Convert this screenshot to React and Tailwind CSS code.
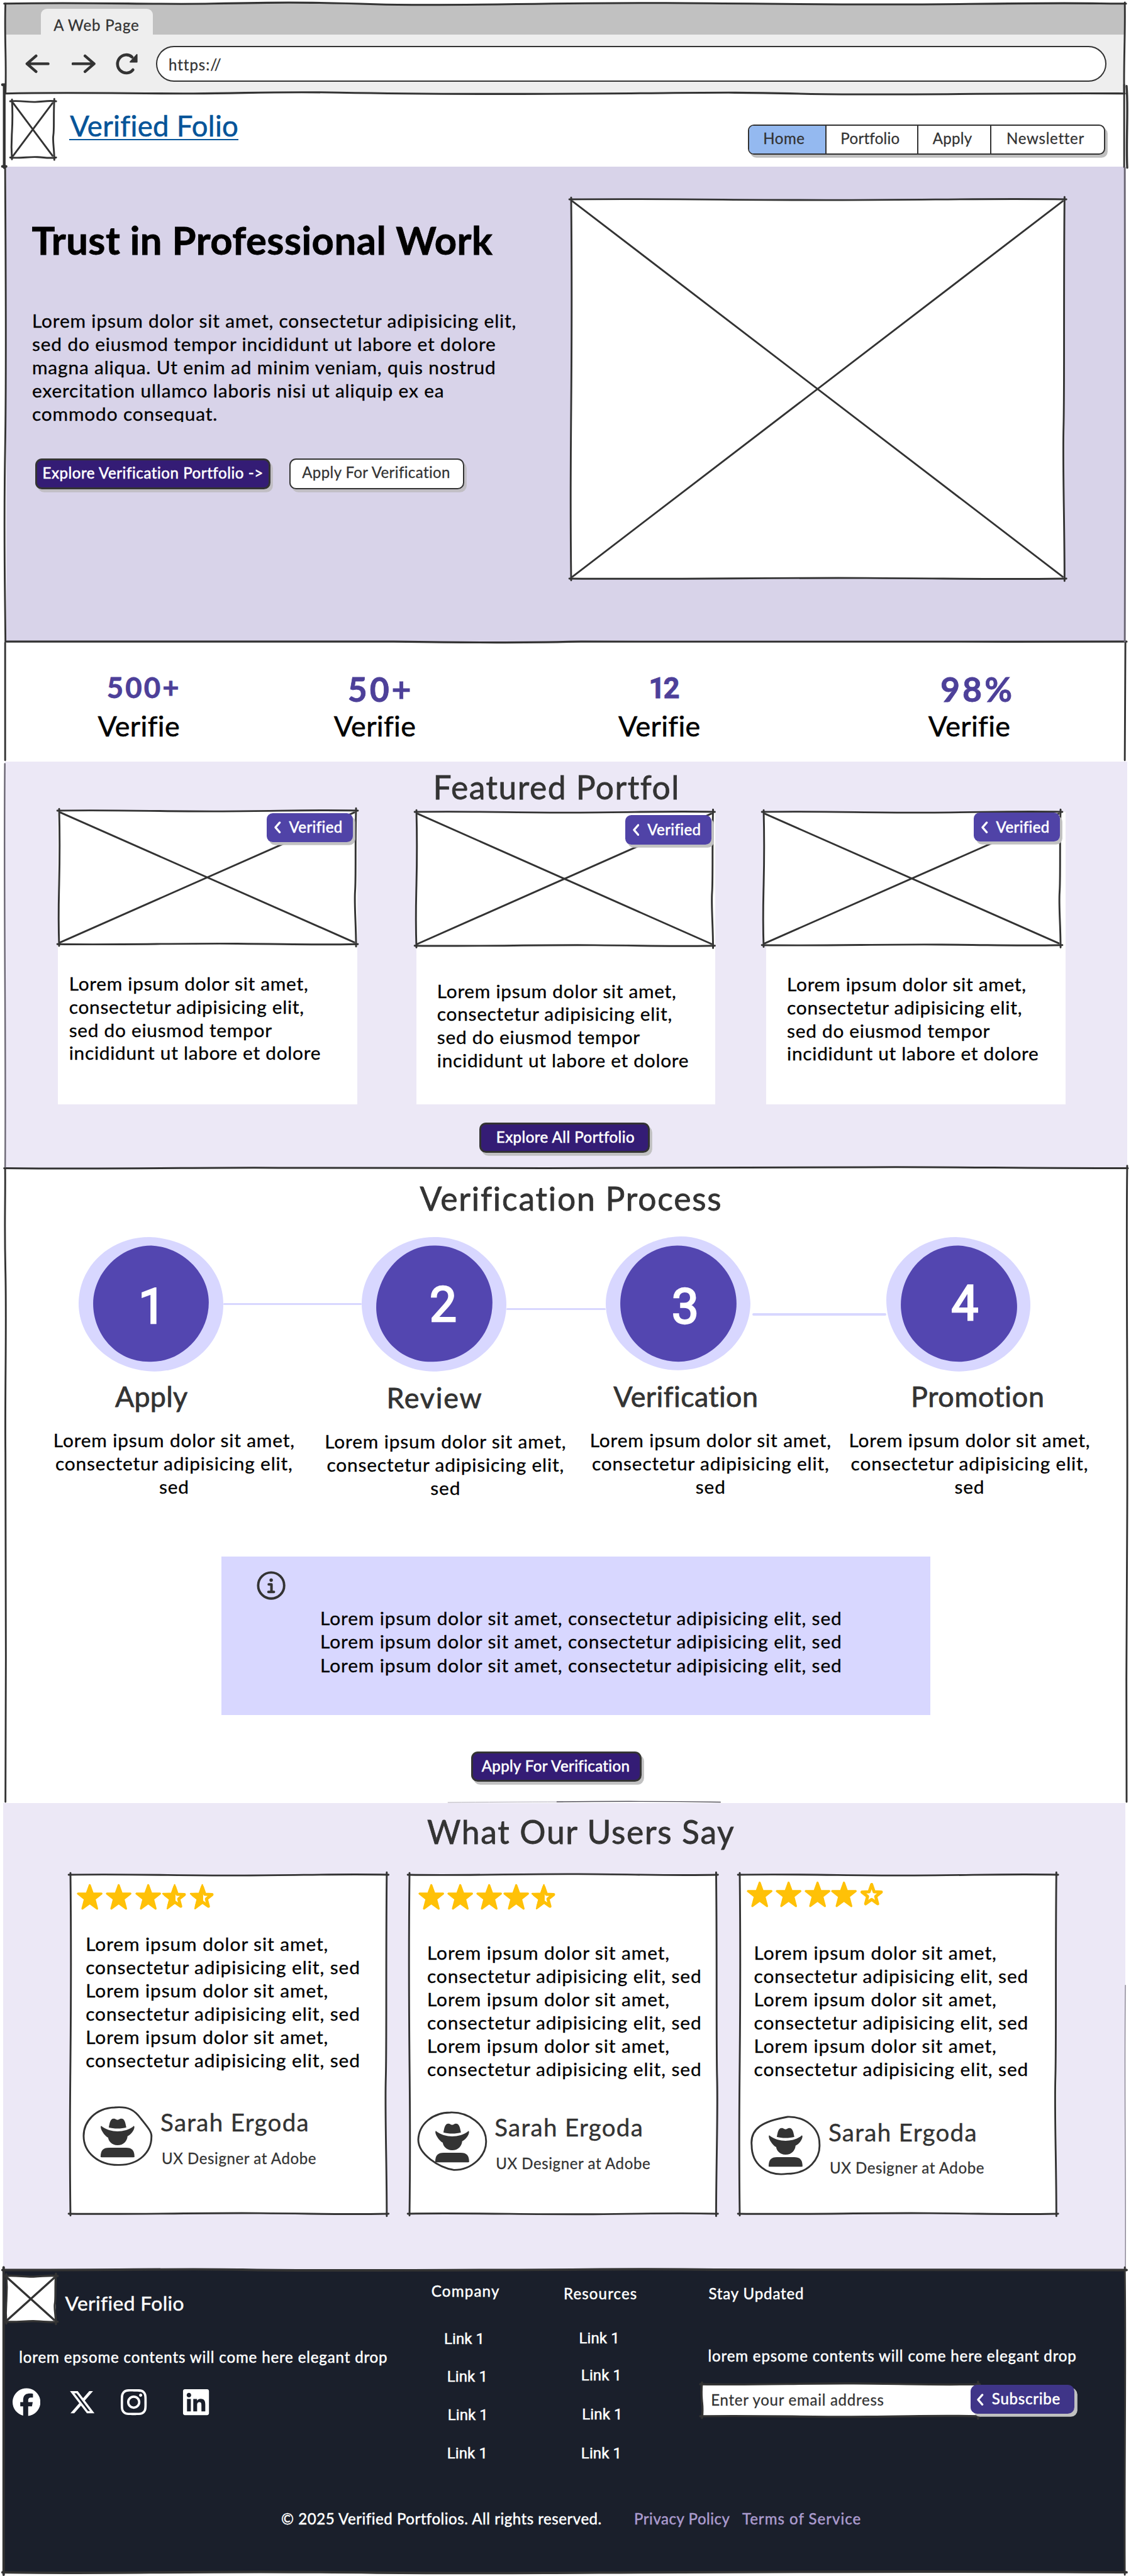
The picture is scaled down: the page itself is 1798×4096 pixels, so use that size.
import React from "react";
import { FaFacebook, FaXTwitter, FaInstagram, FaLinkedin } from "react-icons/fa6";

const INK = "#333333";

/* Hand-drawn rectangle outline with overshooting corners and an optional cross */
function Sketch({ w, h, cross = false, fill = "none", sw = 3, flip = 1 }) {
  const a = 1.6 * flip;
  return (
    <svg width={w} height={h} viewBox={`0 0 ${w} ${h}`} fill="none" stroke={INK} strokeWidth={sw} strokeLinecap="round" className="absolute left-0 top-0 overflow-visible">
      {fill !== "none" && <rect width={w} height={h} fill={fill} stroke="none" />}
      <path d={`M-3 0 C${w * 0.2} ${-a} ${w * 0.35} ${a} ${w * 0.55} ${a * 0.7} S${w * 0.85} ${-a} ${w + 3} 0`} />
      <path d={`M-3 ${h} C${w * 0.2} ${h + a} ${w * 0.4} ${h - a} ${w * 0.6} ${h - a * 0.5} S${w * 0.85} ${h + a} ${w + 3} ${h}`} />
      <path d={`M0 -3 C${a} ${h * 0.25} ${a * 0.5} ${h * 0.4} 0 ${h * 0.55} S${-a} ${h * 0.8} 0 ${h + 3}`} />
      <path d={`M${w} -4 C${w - a} ${h * 0.25} ${w} ${h * 0.5} ${w - a} ${h * 0.6} S${w} ${h * 0.85} ${w} ${h + 4}`} />
      {cross && <path d={`M2 3 L${w - 3} ${h - 3} M${w - 3} 3 L2 ${h - 3}`} />}
    </svg>
  );
}

function PageLines() {
  return (
    <svg width="1868" height="4256" viewBox="0 0 1868 4256" fill="none" stroke={INK} strokeLinecap="round" className="pointer-events-none absolute left-0 top-0">
      <g strokeWidth="3.2">
        <path d="M7 6 C150 3 250 8 350 6 S500 3 620 7 S900 4 1100 5 S1400 9 1600 6.500 S1800 6 1860 6" />
        <path d="M9 154.500 C120 152 230 155 320 154.500 S460 151 560 153 S800 156 1000 154.500 S1200 152 1330 155 S1700 153 1858 154.500" />
        <path d="M11 1060 C300 1061 500 1058 650 1060 S850 1062 960 1060 S1500 1061 1861 1060" />
        <path d="M7 1930 C200 1932 350 1928.500 460 1929.500 S700 1931 900 1930 S1300 1929.500 1430 1928.500 S1700 1930.500 1863 1930" />
      </g>
      <g strokeWidth="3">
        <path d="M9 6 C7 60 11 100 9 154" />
        <path d="M1858 4 C1859 60 1856 100 1857 154" />
        <path d="M1857 140 V276" />
        <path d="M8.500 275 C9 400 11 600 8.500 740 S8 950 9 1060" />
        <path d="M8.500 1062 V1256 M1859 1062 L1858 1256" />
        <path d="M8.500 1932 C9 2000 7 2010 9 2100 S8 2300 9 2400 S10 2800 9 2977" />
        <path d="M1862 1926 C1860 2050 1863 2300 1862 2500 S1860 2800 1861 2977" />
      </g>
      <path d="M7 142 V277 M4 140 H8 M4 275 H10" strokeWidth="4.500" />
      <path d="M1861 142 C1864 180 1860 230 1862 277" strokeWidth="3.500" />
      <path d="M1858 277 C1857 500 1860 800 1858 1060" stroke="#6a6673" strokeWidth="3" />
      <path d="M8 1262 C6 1500 10 1700 8.500 1928" stroke="#6a6673" strokeWidth="2.500" />
      <path d="M740 2978 C800 2977.500 860 2977 930 2977" stroke="#a9a6b2" strokeWidth="1" />
      <path d="M920 2977 C1000 2976 1100 2976 1190 2977.500" stroke="#55535c" strokeWidth="1.500" />
      <path d="M1859 3280 C1857 3450 1860 3600 1859 3748" stroke="#8a8694" strokeWidth="1.500" />
      <g strokeWidth="4">
        <path d="M4 3750.500 C200 3751 300 3748 400 3750 S600 3751 800 3750.500 S1050 3748 1180 3750 S1600 3750 1861 3750.500" />
        <path d="M4 4250 C150 4253 300 4248 500 4249.500 S700 4252 900 4251 S1500 4247 1861 4250" />
        <path d="M6 3746 V4254" />
        <path d="M1858 3746 C1860 3900 1857 4100 1858 4254" strokeWidth="3" />
      </g>
    </svg>
  );
}

function T({ className = "", children }) {
  return <span className={"block translate-x-[1.500px] translate-y-[1.800px] whitespace-nowrap leading-none " + className}>{children}</span>;
}

function Lines({ lines, tracking = "tracking-[0.880px]", className = "" }) {
  return (
    <div className={"translate-x-[2px] translate-y-[1px] text-[31px] text-black [-webkit-text-stroke:0.350px_#000] " + tracking + " " + className}>
      {lines.map((l, i) => (
        <div key={i} className="whitespace-nowrap">{l}</div>
      ))}
    </div>
  );
}

function Chevron({ className = "" }) {
  return (
    <svg viewBox="0 0 11 20" className={className} fill="none" stroke="#fff" strokeWidth="3.400" strokeLinecap="round" strokeLinejoin="round">
      <path d="M9 2 L2 10 L9 18" />
    </svg>
  );
}

function Badge({ className }) {
  return (
    <div className={"absolute flex h-[48px] w-[142px] rounded-[10px] bg-[#5043a7] pl-[12px] text-white shadow-[4px_5px_0_#c1c1c1] " + className}>
      <Chevron className="mt-[14px] h-[20px] w-[11px]" />
      <T className="ml-[12px] mt-[8.800px] text-[25px] tracking-[0.4px] [-webkit-text-stroke:0.6px_#fff]">Verified</T>
    </div>
  );
}

function PortfolioCard({ className, imageClass, imageW, imageH, badgeClass, textClass }) {
  return (
    <article className={"bg-white " + className}>
      <div className={"relative " + imageClass}>
        <Sketch w={imageW} h={imageH} cross fill="#fff" />
        <Badge className={badgeClass} />
      </div>
      <Lines
        tracking="tracking-[0.750px]"
        className={"leading-[38.200px] " + textClass}
        lines={["Lorem ipsum dolor sit amet,", "consectetur adipisicing elit,", "sed do eiusmod tempor", "incididunt ut labore et dolore"]}
      />
    </article>
  );
}

const BLOBS = [
  ["M117 0 C186 2 239 50 239 111 C239 172 190 222 126 222 C55 222 0 170 0 110 C0 50 50 0 117 0Z", "M120 14 C170 16 215 58 215 108 C215 160 172 206 120 206 C62 208 24 160 24 110 C24 60 68 14 120 14Z"],
  ["M121 0 C186 0 239 52 239 112 C239 172 188 222 118 222 C55 222 0 172 0 110 C0 50 54 0 121 0Z", "M119 14 C174 12 216 58 216 108 C216 164 174 206 118 206 C66 208 24 166 24 116 C24 66 64 14 119 14Z"],
  ["M124 -1 C186 -1 237 52 239 110 C238 170 186 220 120 220 C55 220 0 170 0 110 C0 52 56 0 124 -1Z", "M118 14 C172 14 216 58 216 110 C216 162 170 206 120 206 C66 206 24 164 24 110 C24 58 66 14 118 14Z"],
  ["M115 0 C184 2 238 54 238 112 C238 172 186 222 120 222 C55 222 0 172 0 104 C0 50 50 0 115 0Z", "M118 14 C172 16 214 62 216 112 C218 164 168 206 120 206 C66 206 24 164 24 112 C24 58 66 14 118 14Z"],
];

function StepBlob({ i, n, className }) {
  return (
    <div className="grid h-[222px] w-[239px] shrink-0">
      <svg width="239" height="222" viewBox="0 0 239 222" className="overflow-visible [grid-area:1/1]">
        <path d={BLOBS[i][0]} fill="#d8d7ff" />
        <path d={BLOBS[i][1]} fill="#5346b0" />
      </svg>
      <T className={"text-[80px] font-['Roboto',sans-serif] text-white [grid-area:1/1] [-webkit-text-stroke:2.500px_#fff] [stroke-linejoin:round] " + className}>{n}</T>
    </div>
  );
}

function Connector({ className }) {
  return <div className={"h-[3.500px] shrink-0 rounded bg-[#d8d7ff] " + className} />;
}

function Step({ title, className, titleClass }) {
  return (
    <div className={"w-[400px] shrink-0 " + className}>
      <T className={"text-[46.600px] text-[#333] [-webkit-text-stroke:0.8px_#333] " + titleClass}>{title}</T>
      <Lines
        className="mt-[31.500px] text-center leading-[38.300px]"
        lines={["Lorem ipsum dolor sit amet,", "consectetur adipisicing elit,", "sed"]}
      />
    </div>
  );
}

const STAR = "M50 5 L61.500 37 L95 37.500 L68.500 58.500 L78 95 L50 74 L22 95 L31.500 58.500 L5 37.500 L38.500 37Z";
const STAR_INNER = "M50 12 L59.500 40 L87 41 L65.500 58 L73 86 L50 69.500 L27 86 L34.500 58 L13 41 L40.500 40Z";

function Star({ kind, className = "" }) {
  return (
    <svg viewBox="0 0 100 100" className={"h-[44px] w-[43px] shrink-0 " + className}>
      {kind === "full" && <path d={STAR} fill="#ffc107" stroke="#ffc107" strokeWidth="8" strokeLinejoin="round" />}
      {kind !== "full" && <path d={STAR_INNER} fill="#fff" stroke="#ffc107" strokeWidth="12" strokeLinejoin="round" />}
      {kind === "half" && <path d="M50 4 L50 74 L22 95 L31.500 58.500 L5 37.500 L38.500 37Z" fill="#ffc107" stroke="#ffc107" strokeWidth="6" strokeLinejoin="round" />}
    </svg>
  );
}

function Stars({ kinds, className }) {
  return (
    <div className={"flex " + className}>
      <Star kind={kinds[0]} />
      <Star kind={kinds[1]} className="ml-[5px]" />
      <Star kind={kinds[2]} className="ml-[5px]" />
      <Star kind={kinds[3]} className="ml-[1px]" />
      <Star kind={kinds[4]} className="ml-[3px]" />
    </div>
  );
}

const RINGS = [
  "M52 1 C75 -1 85 5 96 20 C108 35 114 42 113 50 C113 75 92 96 60 96 C25 97 1 75 1 48 C1 25 20 2 52 1Z",
  "M54 1 C85 0 113 22 113 48 C114 72 90 96 60 96 C35 92 1 70 1 46 C2 20 25 1 54 1Z",
  "M60 1 C90 0 113 20 113 45 C115 70 95 95 60 95 C25 100 1 78 1 48 C-2 20 20 8 60 1Z",
];

function Avatar({ i }) {
  return (
    <svg width="114" height="97" viewBox="0 0 114 97" className="shrink-0 overflow-visible">
      <path d={RINGS[i]} fill="#fff" stroke={INK} strokeWidth="3" />
      <g fill={INK}>
        <path d="M42.500 34 C44 27 45 19.500 50.500 19.500 C54 19.500 54 21.500 57 21.500 C60 21.500 60 19.500 63.500 19.500 C69 19.500 70 27 71.500 34 C64 36.500 50 36.500 42.500 34Z" />
        <path d="M30 31.500 C38 38 48 40.500 57 40.500 C66 40.500 77 38 84 31.500 C87 33 82 45 73.500 48.500 C73 56 67 63.500 57 63.500 C47 63.500 42 56 41.500 51 C34 47 27 34 30 31.500Z" />
        <path d="M29 83 C29 72 33 67.500 43 67.500 H71 C81 67.500 85 72 85 83Q85 83.500 83 83.500H31Q29 83.500 29 83Z" />
      </g>
    </svg>
  );
}

function Testimonial({ i, w, h, className, kinds, starsClass, textClass, personClass }) {
  return (
    <article className={"relative h-[560px] shrink-0 bg-white " + className}>
      <Sketch w={w} h={h} flip={i === 1 ? -1 : 1} />
      <Stars kinds={kinds} className={starsClass} />
      <Lines
        tracking="tracking-[0.960px]"
        className={"leading-[38.500px] " + textClass}
        lines={[0, 1, 2].flatMap(() => ["Lorem ipsum dolor sit amet,", "consectetur adipisicing elit, sed"])}
      />
      <div className={"flex " + personClass}>
        <Avatar i={i} />
        <div className="ml-[12px] mt-[3.500px] text-[#333]">
          <T className="text-[40px] tracking-[1.350px] [-webkit-text-stroke:0.4px_#333]">Sarah Ergoda</T>
          <T className="ml-[2px] mt-[27px] text-[25px] tracking-[0.6px] [-webkit-text-stroke:0.3px_#333]">UX Designer at Adobe</T>
        </div>
      </div>
    </article>
  );
}

function Stat({ value, className, boxClass }) {
  return (
    <div className={"shrink-0 " + boxClass}>
      <div className="h-[66.700px]">
        <T className={"font-bold text-[#4d4099] [-webkit-text-stroke:0.8px_#4d4099] " + className}>{value}</T>
      </div>
      <T className="text-[46.600px] tracking-[0.4px] text-black [-webkit-text-stroke:0.6px_#000]">Verifie</T>
    </div>
  );
}

function Link1({ className }) {
  return <T className={"font-['Roboto',sans-serif] text-[25px] tracking-[0.1px] [-webkit-text-stroke:0.5px_#fff] " + className}>Link 1</T>;
}

export default function App() {
  return (
    <div className="relative flex h-[4256px] w-[1868px] flex-col overflow-hidden bg-white font-['Lato',sans-serif] [zoom:0.9624]">
      {/* Browser chrome */}
      <div className="ml-[9px] mt-[6px] w-[1849px] shrink-0">
        <div className="flex h-[51px] items-end bg-[#c1c1c1] pl-[59px]">
          <div className="h-[42px] w-[184px] rounded-t-[10px] bg-[#eee] pl-[19px] pt-[12px]">
            <T className="text-[25px] tracking-[0.85px] text-[#333] [-webkit-text-stroke:0.3px_#333]">A Web Page</T>
          </div>
        </div>
        <div className="flex h-[97px] items-center bg-[#eee] pl-[33px]">
          <svg width="40" height="32" viewBox="0 0 40 32" fill="none" stroke={INK} strokeWidth="4.600" strokeLinecap="round" strokeLinejoin="round">
            <path d="M38 16 H3 M18 3 L3 16 L18 29" />
          </svg>
          <svg width="40" height="32" viewBox="0 0 40 32" fill="none" stroke={INK} strokeWidth="4.600" strokeLinecap="round" strokeLinejoin="round" className="ml-[36px]">
            <path d="M2 16 H37 M22 3 L37 16 L22 29" />
          </svg>
          <svg width="38" height="36" viewBox="0 0 38 36" fill="none" stroke={INK} strokeWidth="4.800" strokeLinecap="round" className="ml-[32px]">
            <path d="M29.500 28 A14.500 15 0 1 1 28 7" />
            <path d="M36 3 V15 H25Z" fill={INK} strokeWidth="2" strokeLinejoin="round" />
          </svg>
          <div className="ml-[30px] flex h-[60px] w-[1570px] items-center rounded-[30px] border-[3px] border-[#333] bg-white pl-[17px]">
            <T className="text-[25px] tracking-[1px] text-[#333] [-webkit-text-stroke:0.3px_#333]">https://</T>
          </div>
        </div>
      </div>

      {/* Header */}
      <header className="flex h-[121px] shrink-0 items-start pl-[20px]">
        <div className="relative mt-[13.500px] h-[93px] w-[70px] shrink-0">
          <Sketch w={70} h={93} cross fill="#fff" />
        </div>
        <div className="ml-[24px] mt-[27.400px] w-[280px] border-b-[3px] border-[#055499] pb-[1.300px]">
          <T className="text-[47.300px] tracking-[0.3px] text-[#055499] [-webkit-text-stroke:0.6px_#055499]">Verified Folio</T>
        </div>
        <nav className="ml-auto mr-[42px] mt-[51.500px] flex h-[50px] w-[591px] overflow-visible rounded-[10px] border-[3px] border-[#333] bg-white text-[25px] text-[#333] shadow-[4px_5px_0_#bfbfbf] [-webkit-text-stroke:0.3px_#333]">
          <div className="w-[128px] rounded-l-[7px] border-r-[3px] border-[#333] bg-[#94b9f0] pl-[22px] pt-[7px]">
            <T className="tracking-[0.6px]">Home</T>
          </div>
          <div className="w-[152px] border-r-[3px] border-[#333] pl-[22px] pt-[7px]">
            <T className="tracking-[0.3px]">Portfolio</T>
          </div>
          <div className="w-[120px] border-r-[3px] border-[#333] pl-[22px] pt-[7px]">
            <T className="tracking-[0.3px]">Apply</T>
          </div>
          <div className="pl-[24px] pt-[7px]">
            <T className="tracking-[0.750px]">Newsletter</T>
          </div>
        </nav>
      </header>

      {/* Hero */}
      <section className="ml-[10px] flex h-[785px] w-[1848px] shrink-0 items-start bg-[#d8d3e9]">
        <div className="w-[933.500px] shrink-0 pl-[41px] pt-[88px]">
          <T className="text-[64px] font-bold tracking-[0.5px] text-black [-webkit-text-stroke:0.8px_#000]">Trust in Professional Work</T>
          <Lines
            className="mt-[82.500px] h-[187px] overflow-hidden leading-[38.450px]"
            lines={[
              "Lorem ipsum dolor sit amet, consectetur adipisicing elit,",
              "sed do eiusmod tempor incididunt ut labore et dolore",
              "magna aliqua. Ut enim ad minim veniam, quis nostrud",
              "exercitation ullamco laboris nisi ut aliquip ex ea",
              "commodo consequat.",
            ]}
          />
          <div className="ml-[7px] mt-[61px] flex">
            <button className="flex h-[51px] w-[389px] rounded-[11px] border-[3.500px] border-[#333] bg-[#341c75] pl-[7.500px] pt-[6px] text-white shadow-[4px_5px_0_#c1bec4]">
              <T className="text-[25px] tracking-[0.6px] [-webkit-text-stroke:0.6px_#fff]">Explore Verification Portfolio -&gt;</T>
            </button>
            <button className="ml-[31px] flex h-[51px] w-[289px] rounded-[11px] border-[3px] border-[#333] bg-white pl-[17.500px] pt-[6.500px] text-[#333] shadow-[4px_5px_0_#c1bec4]">
              <T className="text-[25px] tracking-[0.4px] [-webkit-text-stroke:0.3px_#333]">Apply For Verification</T>
            </button>
          </div>
        </div>
        <div className="relative mt-[54.500px] h-[626.500px] w-[815px]">
          <Sketch w={815} h={626.5} cross fill="#fff" />
        </div>
      </section>

      {/* Stats */}
      <section className="flex h-[198px] shrink-0 pl-[160px] pt-[47px]">
        <Stat value="500+" boxClass="w-[390px]" className="pl-[15px] pt-[3px] text-[47.300px] tracking-[3.200px]" />
        <Stat value="50+" boxClass="w-[470px]" className="pl-[23px] pt-[1.700px] text-[55.600px] tracking-[4px]" />
        <Stat value="12" boxClass="w-[512px]" className="pl-[50px] pt-[5px] text-[47.300px] tracking-[-3px] font-['Roboto',sans-serif]" />
        <Stat value="98%" boxClass="w-[200px]" className="pl-[20px] pt-[1.700px] text-[55.600px] tracking-[4.200px]" />
      </section>

      {/* Featured portfolios */}
      <section className="ml-[8px] h-[672px] w-[1854px] shrink-0 bg-[#ece8f6] pt-[13.500px]">
        <T className="ml-[706px] text-[53.600px] tracking-[1.550px] text-[#333] [-webkit-text-stroke:0.8px_#333]">Featured Portfol</T>
        <div className="flex h-[500px] items-start">
          <PortfolioCard
            className="ml-[88px] mt-[14.500px] h-[485.500px] w-[494px]"
            imageClass="ml-[2px] h-[220.500px] w-[490.500px]"
            imageW={490.5} imageH={220.5}
            badgeClass="left-[343px] top-[3.500px]"
            textClass="ml-[16px] mt-[45.400px]"
          />
          <PortfolioCard
            className="ml-[98px] mt-[16.500px] h-[483.500px] w-[493px]"
            imageClass="-ml-[0.500px] h-[221px] w-[490px]"
            imageW={490} imageH={221}
            badgeClass="left-[345.500px] top-[5.500px]"
            textClass="ml-[32px] mt-[55px]"
          />
          <PortfolioCard
            className="ml-[85px] mt-[16.500px] h-[483.500px] w-[494px]"
            imageClass="-ml-[4.500px] h-[220px] w-[490.500px]"
            imageW={490.5} imageH={220}
            badgeClass="left-[347.500px] top-[1px]"
            textClass="ml-[32px] mt-[45px]"
          />
        </div>
        <button className="ml-[784px] mt-[30px] flex h-[50px] w-[281px] rounded-[11px] border-[3.500px] border-[#333] bg-[#341c75] pl-[23px] pt-[6px] text-white shadow-[4px_5px_0_#c1c1c1]">
          <T className="text-[25px] tracking-[0.5px] [-webkit-text-stroke:0.6px_#fff]">Explore All Portfolio</T>
        </button>
      </section>

      {/* Verification process */}
      <section className="h-[1049px] shrink-0 pt-[21.500px]">
        <T className="ml-[692px] text-[53.600px] tracking-[1.850px] text-[#333] [-webkit-text-stroke:0.8px_#333]">Verification Process</T>
        <div className="mt-[39px] flex pl-[130px]">
          <StepBlob i={0} n="1" className="pl-[97px] pt-[74px]" />
          <Connector className="mt-[109px] w-[228px]" />
          <StepBlob i={1} n="2" className="pl-[111px] pt-[70px]" />
          <Connector className="mt-[117px] w-[165px]" />
          <StepBlob i={2} n="3" className="pl-[107px] pt-[74px]" />
          <Connector className="ml-[3px] mt-[126px] w-[221px]" />
          <StepBlob i={3} n="4" className="pl-[106px] pt-[68px]" />
        </div>
        <div className="mt-[15.700px] flex">
          <Step title="Apply" className="ml-[85.700px]" titleClass="pl-[103px] tracking-[0.2px]" />
          <Step title="Review" className="ml-[48.300px] mt-[2px]" titleClass="pl-[103px] tracking-[1.850px]" />
          <Step title="Verification" className="ml-[38px]" titleClass="pl-[40px] tracking-[0.450px]" />
          <Step title="Promotion" className="ml-[27.700px]" titleClass="pl-[103.500px] tracking-[0.7px]" />
        </div>
        <div className="ml-[366px] mt-[95px] flex h-[261.500px] w-[1171px] items-start bg-[#d8d7ff] pl-[58px]">
          <svg width="48" height="48" viewBox="0 0 48 48" fill="none" stroke={INK} strokeWidth="4" strokeLinecap="round" strokeLinejoin="round" className="mt-[24px] shrink-0">
            <circle cx="24" cy="24" r="21.500" />
            <path d="M20 22 H24.500 V34 M19.500 34.500 H28.500" strokeWidth="4.200" />
            <circle cx="24" cy="15" r="2.800" fill={INK} stroke="none" />
          </svg>
          <Lines
            tracking="tracking-[0.930px]"
            className="ml-[55px] mt-[81px] leading-[38.900px]"
            lines={[0, 1, 2].map(() => "Lorem ipsum dolor sit amet, consectetur adipisicing elit, sed")}
          />
        </div>
        <button className="ml-[778px] mt-[60.500px] flex h-[50px] w-[282px] rounded-[11px] border-[3.500px] border-[#333] bg-[#341c75] pl-[13px] pt-[6px] text-white shadow-[4px_5px_0_#c1c1c1]">
          <T className="text-[25px] tracking-[0.4px] [-webkit-text-stroke:0.6px_#fff]">Apply For Verification</T>
        </button>
      </section>

      {/* Testimonials */}
      <section className="ml-[5px] h-[771px] w-[1854px] shrink-0 bg-[#ece8f6] pt-[19.200px]">
        <T className="ml-[699px] text-[53.600px] tracking-[1.750px] text-[#333] [-webkit-text-stroke:0.8px_#333]">What Our Users Say</T>
        <div className="mt-[46px] flex">
          <Testimonial
            i={0} w={522.5} h={560} className="ml-[111px] w-[522.500px]"
            kinds={["full", "full", "full", "half", "half"]}
            starsClass="pl-[11px] pt-[14px]" textClass="pl-[23.500px] pt-[35.500px]" personClass="pl-[21.500px] pt-[58.500px]"
          />
          <Testimonial
            i={1} w={506.5} h={560} className="ml-[37.500px] w-[506.500px]"
            kinds={["full", "full", "full", "full", "half"]}
            starsClass="pl-[15px] pt-[14px]" textClass="pl-[27.500px] pt-[49.500px]" personClass="pl-[13.500px] pt-[53px]"
          />
          <Testimonial
            i={2} w={523} h={560} className="ml-[40px] w-[523px]"
            kinds={["full", "full", "full", "full", "empty"]}
            starsClass="pl-[10.500px] pt-[10.500px]" textClass="pl-[21px] pt-[53px]" personClass="pl-[18.500px] pt-[60.500px]"
          />
        </div>
      </section>

      {/* Footer */}
      <footer className="ml-[6px] h-[500px] w-[1852px] shrink-0 bg-[#1a1f2b] text-[25px] text-white [-webkit-text-stroke:0.5px_#fff]">
        <div className="flex h-[320px] items-start">
          <div className="w-[700px] shrink-0">
            <div className="flex items-start">
              <div className="relative ml-[4px] mt-[10px] h-[75.500px] w-[82px] shrink-0">
                <Sketch w={82} h={75.5} cross fill="#fff" sw={3.5} />
              </div>
              <T className="ml-[14px] mt-[37.700px] text-[33px] tracking-[0.4px]">Verified Folio</T>
            </div>
            <T className="ml-[24px] mt-[44px] tracking-[0.9px]">lorem epsome contents will come here elegant drop</T>
            <div className="mt-[40px] flex items-center pl-[15px] [-webkit-text-stroke:0]">
              <FaFacebook className="h-[47px] w-[46px]" />
              <FaXTwitter className="ml-[46px] h-[45px] w-[45px]" />
              <FaInstagram className="ml-[38px] h-[49px] w-[49px]" />
              <FaLinkedin className="ml-[54px] h-[49px] w-[49px]" />
            </div>
          </div>
          <div className="w-[220px] shrink-0 pt-[21px]">
            <T className="ml-[5px] tracking-[1.3px]">Company</T>
            <Link1 className="ml-[26px] mt-[54px]" />
            <Link1 className="ml-[31px] mt-[37.200px]" />
            <Link1 className="ml-[32px] mt-[38.500px]" />
            <Link1 className="ml-[31px] mt-[38.500px]" />
          </div>
          <div className="w-[234px] shrink-0 pt-[25.500px]">
            <T className="ml-[3.500px] tracking-[1.2px]">Resources</T>
            <Link1 className="ml-[29px] mt-[48px]" />
            <Link1 className="ml-[32.500px] mt-[37px]" />
            <Link1 className="ml-[34px] mt-[39px]" />
            <Link1 className="ml-[32.500px] mt-[39px]" />
          </div>
          <div className="shrink-0 pt-[25.500px]">
            <T className="ml-[9px] tracking-[0.9px]">Stay Updated</T>
            <T className="ml-[8px] mt-[77px] tracking-[0.9px]">lorem epsome contents will come here elegant drop</T>
            <div className="mt-[37px] flex items-start">
              <div className="relative h-[53px] w-[456px] bg-white text-[#333]">
                <Sketch w={456} h={53} sw={3.5} flip={-1} />
                <T className="pl-[13px] pt-[11.500px] tracking-[0.750px] [-webkit-text-stroke:0.3px_#333]">Enter your email address</T>
              </div>
              <button className="relative -ml-[13px] mt-[1px] flex h-[48px] w-[172px] rounded-[11px] bg-[#3f3588] pl-[11px] shadow-[5px_5px_0_#c1c1c1]">
                <Chevron className="mt-[14px] h-[20px] w-[11px]" />
                <T className="ml-[12px] mt-[8.500px] tracking-[0.8px] [-webkit-text-stroke:0.6px_#fff]">Subscribe</T>
              </button>
            </div>
          </div>
        </div>
        <div className="mt-[77.500px] flex pl-[457px]">
          <T className="w-[583px] tracking-[0.550px]">© 2025 Verified Portfolios. All rights reserved.</T>
          <T className="w-[178.500px] tracking-[0.550px] text-[#ab9bce] [-webkit-text-stroke:0.5px_#ab9bce]">Privacy Policy</T>
          <T className="tracking-[1.050px] text-[#ab9bce] [-webkit-text-stroke:0.5px_#ab9bce]">Terms of Service</T>
        </div>
      </footer>

      <PageLines />
    </div>
  );
}
